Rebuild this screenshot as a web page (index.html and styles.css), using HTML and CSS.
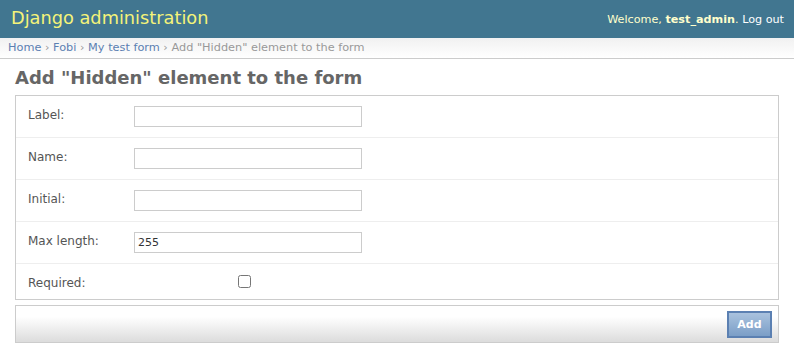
FILE: index.html
```html
<!DOCTYPE html>
<html lang="en">
<head>
    <meta charset="UTF-8">
    <meta name="viewport" content="width=device-width, initial-scale=1.0">
    <title>Add "Hidden" element to the form | Django site admin</title>
    <link rel="stylesheet" href="styles.css">
</head>
<body>
    <div class="header">
        <h1 class="branding">Django administration</h1>
        <div class="user-tools">Welcome, <strong>test_admin</strong>. <a href="#">Log out</a></div>
    </div>
    <div class="breadcrumbs">
        <a href="#">Home</a> &rsaquo; <a href="#">Fobi</a> &rsaquo; <a href="#">My test form</a> &rsaquo; Add "Hidden" element to the form
    </div>

    <div class="content">
        <h1>Add "Hidden" element to the form</h1>
        <form>
            <fieldset class="module">
                <div class="form-row">
                    <label for="id_label">Label:</label>
                    <input type="text" id="id_label" name="label">
                </div>
                <div class="form-row">
                    <label for="id_name">Name:</label>
                    <input type="text" id="id_name" name="name">
                </div>
                <div class="form-row">
                    <label for="id_initial">Initial:</label>
                    <input type="text" id="id_initial" name="initial">
                </div>
                <div class="form-row">
                    <label for="id_max_length">Max length:</label>
                    <input type="text" id="id_max_length" name="max_length" value="255">
                </div>
                <div class="form-row">
                    <label for="id_required">Required:</label>
                    <input type="checkbox" id="id_required" name="required" class="checkbox">
                </div>
            </fieldset>
            <div class="submit-row">
                <button type="submit" class="default">Add</button>
            </div>
        </form>
    </div>
</body>
</html>
```

FILE: styles.css
```css
body {
    margin: 0;
    padding: 0;
    font-family: "DejaVu Sans", Verdana, sans-serif;
    font-size: 12px;
    color: #333;
    background: #fff;
}

a {
    color: #5b80b2;
    text-decoration: none;
}

.header {
    display: flex;
    justify-content: space-between;
    align-items: center;
    height: 38px;
    padding: 0 10px 0 11px;
    background: #417690;
    box-sizing: border-box;
}

.branding {
    margin: 0 0 2px;
    font-size: 17.75px;
    font-weight: normal;
    color: #f4f379;
}

.user-tools {
    font-size: 11.2px;
    color: #ffc;
}

.user-tools strong {
    font-weight: bold;
}

.user-tools a {
    color: #fff;
}

.breadcrumbs {
    height: 21px;
    padding: 3px 8px 0;
    font-size: 11.3px;
    color: #999;
    background: linear-gradient(#f1f1f1, #fff);
    border-bottom: 1px solid #ccc;
    box-sizing: border-box;
}

.content {
    padding: 0 15px;
}

.content h1 {
    margin: 7px 0 6px;
    font-size: 18px;
    font-weight: bold;
    color: #666;
    line-height: 23px;
}

fieldset {
    margin: 0;
    padding: 0;
    border: 1px solid #ccc;
}

.form-row {
    display: flex;
    align-items: flex-start;
    padding: 10px 12px;
    border-bottom: 1px solid #eee;
}

.form-row:last-child {
    border-bottom: none;
    padding-bottom: 9px;
}

.form-row label {
    width: 106px;
    margin-top: 2px;
    line-height: 14px;
    color: #555;
    font-size: 12px;
}

.form-row input[type="text"] {
    width: 228px;
    height: 21px;
    margin: 0;
    padding: 2px 3px;
    border: 1px solid #ccc;
    box-sizing: border-box;
    font-family: "DejaVu Sans", Verdana, sans-serif;
    font-size: 11px;
    color: #333;
}

.form-row .checkbox {
    width: 13px;
    height: 13px;
    margin: 1px 0 0 104px;
}

.submit-row {
    display: flex;
    justify-content: flex-end;
    margin-top: 5px;
    padding: 5px 6px 4px;
    border: 1px solid #ccc;
    background: linear-gradient(#fff 30%, #dcdcdc);
}

.submit-row button {
    width: 45px;
    height: 27px;
    padding: 0;
    border: 2px solid #5b80b2;
    background: linear-gradient(#a9c2de, #7b9ec7);
    color: #fff;
    font-family: "DejaVu Sans", Verdana, sans-serif;
    font-size: 11px;
    font-weight: bold;
    cursor: pointer;
}
```
